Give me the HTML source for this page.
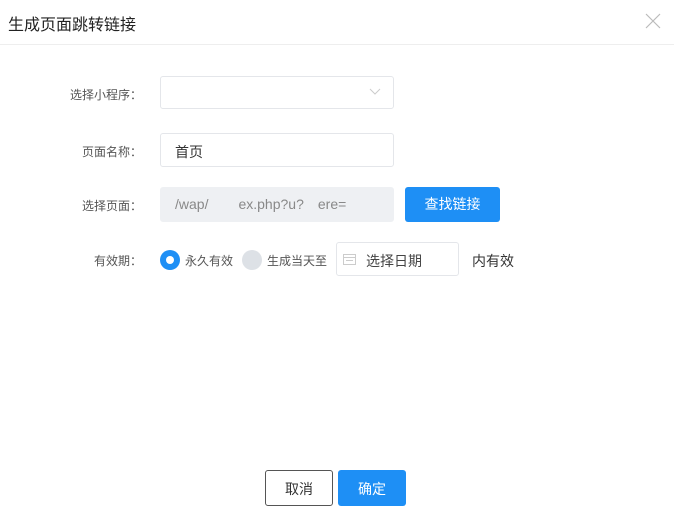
<!DOCTYPE html><html><head><style>
body{margin:0;width:674px;height:500px;overflow:hidden;background:#fff;font-family:"Liberation Sans","Noto Sans CJK SC",sans-serif;position:relative;color:#333}
.a{position:absolute}
.lbl{position:absolute;font-size:12px;color:#555;text-align:right;width:142px;left:0}
.box{position:absolute;border:1px solid #e4e6ea;border-radius:3px;box-sizing:border-box;background:#fff}
</style></head><body>
<div class="a" style="left:8px;top:11px;font-size:16px;color:#222">生成页面跳转链接</div>
<svg class="a" style="left:645px;top:13px" width="16" height="16"><path d="M1 1L15 15M15 1L1 15" stroke="#bbb" stroke-width="1.2"/></svg>
<div class="a" style="left:0;top:44px;width:674px;height:1px;background:#eee"></div>

<div class="lbl" style="top:86px">选择小程序：</div>
<div class="box" style="left:160px;top:76px;width:234px;height:33px"></div>
<svg class="a" style="left:369px;top:88px" width="12" height="8"><path d="M1 1L6 6L11 1" stroke="#ccc" fill="none"/></svg>

<div class="lbl" style="top:143px">页面名称：</div>
<div class="box" style="left:160px;top:133px;width:234px;height:34px"></div>
<div class="a" style="left:175px;top:142px;font-size:14px">首页</div>

<div class="lbl" style="top:197px">选择页面：</div>
<div class="box" style="left:160px;top:187px;width:234px;height:35px;background:#eef0f3;border-color:#eef0f3"></div>
<div class="a" style="left:175px;top:196px;font-size:14px;color:#888">/wap/<span style="margin-left:30px">ex.php?u?</span><span style="margin-left:14px">ere=</span></div>
<div class="a" style="left:405px;top:187px;width:95px;height:35px;background:#1e8ff5;border-radius:3px;color:#fff;font-size:14px;text-align:center;line-height:35px">查找链接</div>

<div class="lbl" style="top:252px">有效期：</div>
<div class="a" style="left:160px;top:250px;width:20px;height:20px;border-radius:50%;background:#1e8ff5"></div>
<div class="a" style="left:166px;top:256px;width:8px;height:8px;border-radius:50%;background:#fff"></div>
<div class="a" style="left:185px;top:252px;font-size:12px;color:#555">永久有效</div>
<div class="a" style="left:242px;top:250px;width:20px;height:20px;border-radius:50%;background:#dde1e6"></div>
<div class="a" style="left:267px;top:252px;font-size:12px;color:#555">生成当天至</div>
<div class="box" style="left:336px;top:242px;width:123px;height:34px"></div>
<svg class="a" style="left:343px;top:253px" width="13" height="12"><rect x="0.5" y="1.5" width="12" height="10" fill="none" stroke="#ccc"/><path d="M0.5 4.5H12.5M3 7.5h7" stroke="#ccc"/></svg>
<div class="a" style="left:366px;top:251px;font-size:14px;color:#444">选择日期</div>
<div class="a" style="left:472px;top:251px;font-size:14px;color:#333">内有效</div>

<div class="a" style="left:265px;top:470px;width:68px;height:36px;box-sizing:border-box;border:1px solid #555;border-radius:3px;font-size:14px;text-align:center;line-height:36px">取消</div>
<div class="a" style="left:338px;top:470px;width:68px;height:36px;background:#1e8ff5;border-radius:3px;color:#fff;font-size:14px;text-align:center;line-height:38px">确定</div>
</body></html>
